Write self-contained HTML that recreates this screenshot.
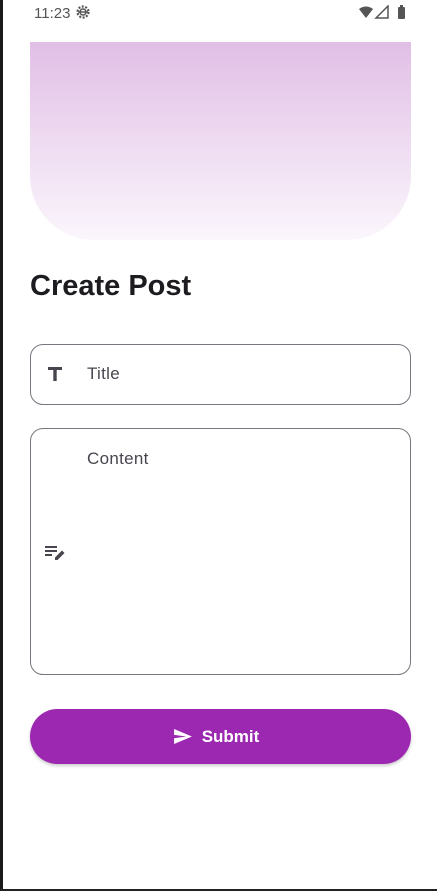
<!DOCTYPE html>
<html><head><style>
*{margin:0;padding:0;box-sizing:border-box}
body{width:437px;height:891px;background:#fff;font-family:"Liberation Sans",sans-serif;position:relative;overflow:hidden}
.strip{position:absolute;left:0;top:0;width:3px;height:891px;background:#1a1a1a}
.bot{position:absolute;left:0;bottom:0;width:437px;height:2px;background:#222}
.sb{position:absolute;top:4px;left:34px;font-size:15px;color:#555}
.hero{position:absolute;left:30px;top:42px;width:381px;height:198px;border-radius:0 0 64px 64px;background:linear-gradient(#e1bfe6,#fbf6fc)}
h1{position:absolute;left:30px;top:270px;font-size:29px;font-weight:bold;color:#1d1b20}
.f{position:absolute;left:30px;width:381px;border:1px solid #79747e;border-radius:13px}
.lbl{position:absolute;left:57px;font-size:17px;color:#49454f;letter-spacing:.3px}
.btn{position:absolute;left:30px;top:709px;width:381px;height:55px;border-radius:28px;background:#9c27b0;box-shadow:0 2px 3px rgba(0,0,0,.2);color:#fff;font-weight:bold;font-size:17px;display:flex;align-items:center;justify-content:center;gap:10px;padding-right:8px}
</style></head><body>
<div class="strip"></div><div class="bot"></div>
<div class="sb">11:23 <svg width="16" height="16" viewBox="0 0 16 16" style="vertical-align:-2px"><circle cx="8" cy="8" r="5.5" fill="none" stroke="#555" stroke-width="2.2" stroke-dasharray="2 1.5"/><circle cx="8" cy="8" r="3" fill="none" stroke="#555" stroke-width="1.5"/><line x1="3" y1="8" x2="13" y2="8" stroke="#555" stroke-width="1.5"/></svg></div>
<svg style="position:absolute;left:358px;top:5px" width="52" height="15" viewBox="0 0 52 15"><path d="M1 4Q8-1 15 4L8 13Z" fill="#555"/><path d="M30 1V13H18Z" fill="none" stroke="#555" stroke-width="1.5"/><rect x="40" y="2" width="7" height="12" rx="1" fill="#555"/><rect x="42" y="0" width="3" height="2" fill="#555"/></svg>
<div class="hero"></div>
<h1>Create Post</h1>
<div class="f" style="top:344px;height:61px"></div>
<svg style="position:absolute;left:47px;top:366px" width="16" height="16" viewBox="0 0 16 16"><path d="M1 1H15V4H9.7V15H6.3V4H1Z" fill="#49454f"/></svg>
<div class="lbl" style="left:87px;top:364px">Title</div>
<div class="f" style="top:428px;height:247px"></div>
<div class="lbl" style="left:87px;top:449px">Content</div>
<svg style="position:absolute;left:45px;top:544px" width="22" height="18" viewBox="0 0 22 18"><rect x="0" y="2" width="12" height="2" fill="#49454f"/><rect x="0" y="6" width="12" height="2" fill="#49454f"/><rect x="0" y="10" width="7" height="2" fill="#49454f"/><path d="M10 16L10 13.5L17 6.5L19.5 9L12.5 16Z" fill="#49454f"/></svg>
<div class="btn"><svg width="18" height="15" viewBox="0 0 19 16"><path d="M0 16L19 8L0 0V6.2L13 8L0 9.8Z" fill="#fff"/></svg>Submit</div>
</body></html>
